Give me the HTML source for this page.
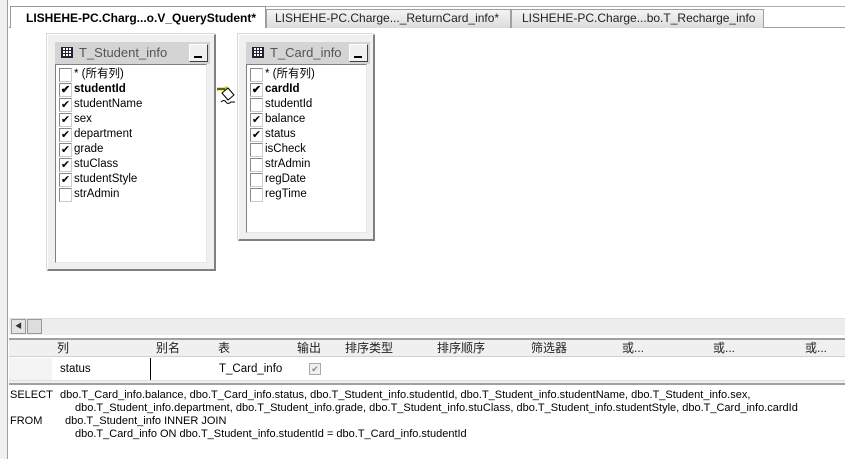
<!DOCTYPE html>
<html><head><meta charset="utf-8"><style>
*{box-sizing:border-box;margin:0;padding:0}
body{width:845px;height:459px;position:relative;background:#fff;font-family:"Liberation Sans","Noto Sans CJK SC",sans-serif;font-size:11px;color:#000;overflow:hidden}
.a{position:absolute}
.tab{position:absolute;top:9px;height:19px;border:1px solid #a0a0a0;border-bottom:none;background:linear-gradient(#f4f4f4,#dcdcdc);font-size:12px;line-height:17px;padding-left:8px;white-space:nowrap;color:#222}
.tbl{position:absolute;background:#f0f0f0;border:1px solid #fff;border-right:2px solid #808080;border-bottom:2px solid #808080;box-shadow:-1px -1px 0 #d8d8d8}
.title{position:absolute;left:7px;top:7px;height:22px;background:#d4d4d4;font-size:13px;color:#555;line-height:22px;padding-left:24px}
.ico{position:absolute;left:6px;top:5px;width:12px;height:11px;border:1px solid #223;background:repeating-linear-gradient(90deg,#223 0 1px,transparent 1px 3px),repeating-linear-gradient(0deg,#223 0 1px,#fff 1px 3px)}
.min{position:absolute;right:2px;top:2px;width:19px;height:18px;background:#f0f0f0;border:1px solid #fff;border-right:1px solid #404040;border-bottom:1px solid #404040}
.min:after{content:"";position:absolute;left:4px;top:11px;width:8px;height:2px;background:#000}
.list{position:absolute;left:7px;top:29px;background:#fff;border:1px solid #808080;border-right-color:#e8e8e8;border-bottom-color:#e8e8e8}
.row{position:relative;height:15px;line-height:15px;padding-left:18px;font-size:11.5px;color:#000;white-space:nowrap}
.cb{position:absolute;left:3px;top:1px;width:13px;height:14px;border:1px solid #888;border-right-color:#ccc;border-bottom-color:#ccc;background:#fff;font-size:11px;line-height:12px;text-align:center}
.b{font-weight:bold}
.hd{position:absolute;top:340px;height:17px;font-size:12px;line-height:17px;color:#222}
.sql{position:absolute;font-size:11px;color:#000;white-space:nowrap;line-height:13px}
</style></head><body>
<div class="a" style="left:0;top:0;width:845px;height:28px;background:#fff"></div>
<div class="a" style="left:0;top:0;width:8px;height:459px;background:#f0f0f0;border-right:1px solid #a0a0a0"></div>
<div class="a" style="left:9px;top:27px;width:836px;height:1px;background:#a0a0a0"></div>
<div class="a" style="left:225px;top:6px;width:620px;height:1px;background:#b0b0b0"></div>
<div class="tab" style="left:10px;top:6px;height:22px;width:256px;background:#fff;font-weight:bold;color:#000;border-color:#999;line-height:22px;padding-left:15px">LISHEHE-PC.Charg...o.V_QueryStudent*</div>
<div class="tab" style="left:266px;width:245px">LISHEHE-PC.Charge..._ReturnCard_info*</div>
<div class="tab" style="left:511px;width:253px;padding-left:10px">LISHEHE-PC.Charge...bo.T_Recharge_info</div>

<div class="tbl" style="left:47px;top:34px;width:169px;height:237px">
<div class="title" style="width:155px"><span class="ico"></span>T_Student_info<span class="min"></span></div>
<div class="list" style="width:152px;height:199px;padding-top:2px">
<div class="row"><span class="cb"></span>* (所有列)</div>
<div class="row b"><span class="cb">✔</span>studentId</div>
<div class="row"><span class="cb">✔</span>studentName</div>
<div class="row"><span class="cb">✔</span>sex</div>
<div class="row"><span class="cb">✔</span>department</div>
<div class="row"><span class="cb">✔</span>grade</div>
<div class="row"><span class="cb">✔</span>stuClass</div>
<div class="row"><span class="cb">✔</span>studentStyle</div>
<div class="row"><span class="cb"></span>strAdmin</div>
</div></div>

<div class="tbl" style="left:238px;top:34px;width:137px;height:207px">
<div class="title" style="width:124px"><span class="ico"></span>T_Card_info<span class="min"></span></div>
<div class="list" style="width:121px;height:169px;padding-top:2px">
<div class="row"><span class="cb"></span>* (所有列)</div>
<div class="row b"><span class="cb">✔</span>cardId</div>
<div class="row"><span class="cb"></span>studentId</div>
<div class="row"><span class="cb">✔</span>balance</div>
<div class="row"><span class="cb">✔</span>status</div>
<div class="row"><span class="cb"></span>isCheck</div>
<div class="row"><span class="cb"></span>strAdmin</div>
<div class="row"><span class="cb"></span>regDate</div>
<div class="row"><span class="cb"></span>regTime</div>
</div></div>

<svg class="a" style="left:216px;top:84px" width="22" height="22"><path d="M1 5h8l2 -2" stroke="#cc0" stroke-width="3" fill="none"/><path d="M1 5h8" stroke="#000" stroke-width="1" fill="none"/><path d="M6 9l6-5 6 7-6 5z" fill="#fff" stroke="#000"/><path d="M5 18q3-3 5 0t5 0h4" stroke="#000" fill="none"/></svg>

<div class="a" style="left:9px;top:318px;width:836px;height:17px;background:#ededed;border-top:1px solid #e0e0e0"></div>
<div class="a" style="left:11px;top:319px;width:15px;height:15px;background:#e4e4e4;border:1px solid #999;font-size:7px;line-height:13px;text-align:center;color:#333">◀</div>
<div class="a" style="left:27px;top:319px;width:15px;height:15px;background:#ddd;border:1px solid #999"></div>
<div class="a" style="left:9px;top:338px;width:836px;height:2px;background:#a0a0a0"></div>
<div class="a" style="left:9px;top:340px;width:836px;height:17px;background:#f0f0f0;border-bottom:1px solid #d0d0d0"></div>
<div class="a" style="left:9px;top:357px;width:836px;height:24px;background:#fff;border-bottom:1px solid #e0e0e0"></div>
<div class="a" style="left:9px;top:358px;width:43px;height:22px;background:#f4f4f4"></div>
<div class="a" style="left:9px;top:381px;width:836px;height:4px;background:#f0f0f0;border-bottom:2px solid #a0a0a0"></div>
<div class="a" style="left:150px;top:358px;width:1px;height:22px;background:#000"></div>
<div class="hd" style="left:57px">列</div>
<div class="hd" style="left:156px">别名</div>
<div class="hd" style="left:218px">表</div>
<div class="hd" style="left:297px">输出</div>
<div class="hd" style="left:345px">排序类型</div>
<div class="hd" style="left:437px">排序顺序</div>
<div class="hd" style="left:531px">筛选器</div>
<div class="hd" style="left:622px">或...</div>
<div class="hd" style="left:713px">或...</div>
<div class="hd" style="left:805px">或...</div>
<div class="a" style="left:60px;top:363px;font-size:11.5px">status</div>
<div class="a" style="left:219px;top:363px;font-size:11.5px">T_Card_info</div>
<div class="a" style="left:309px;top:363px;width:12px;height:12px;border:1px solid #aaa;background:#f0f0f0;font-size:9px;line-height:10px;text-align:center;color:#888">✔</div>

<div class="sql" style="left:10px;top:389px">SELECT</div>
<div class="sql" style="left:60px;top:389px">dbo.T_Card_info.balance, dbo.T_Card_info.status, dbo.T_Student_info.studentId, dbo.T_Student_info.studentName, dbo.T_Student_info.sex,</div>
<div class="sql" style="left:75px;top:402px">dbo.T_Student_info.department, dbo.T_Student_info.grade, dbo.T_Student_info.stuClass, dbo.T_Student_info.studentStyle, dbo.T_Card_info.cardId</div>
<div class="sql" style="left:10px;top:415px">FROM</div>
<div class="sql" style="left:65px;top:415px">dbo.T_Student_info INNER JOIN</div>
<div class="sql" style="left:75px;top:428px">dbo.T_Card_info ON dbo.T_Student_info.studentId = dbo.T_Card_info.studentId</div>
</body></html>
